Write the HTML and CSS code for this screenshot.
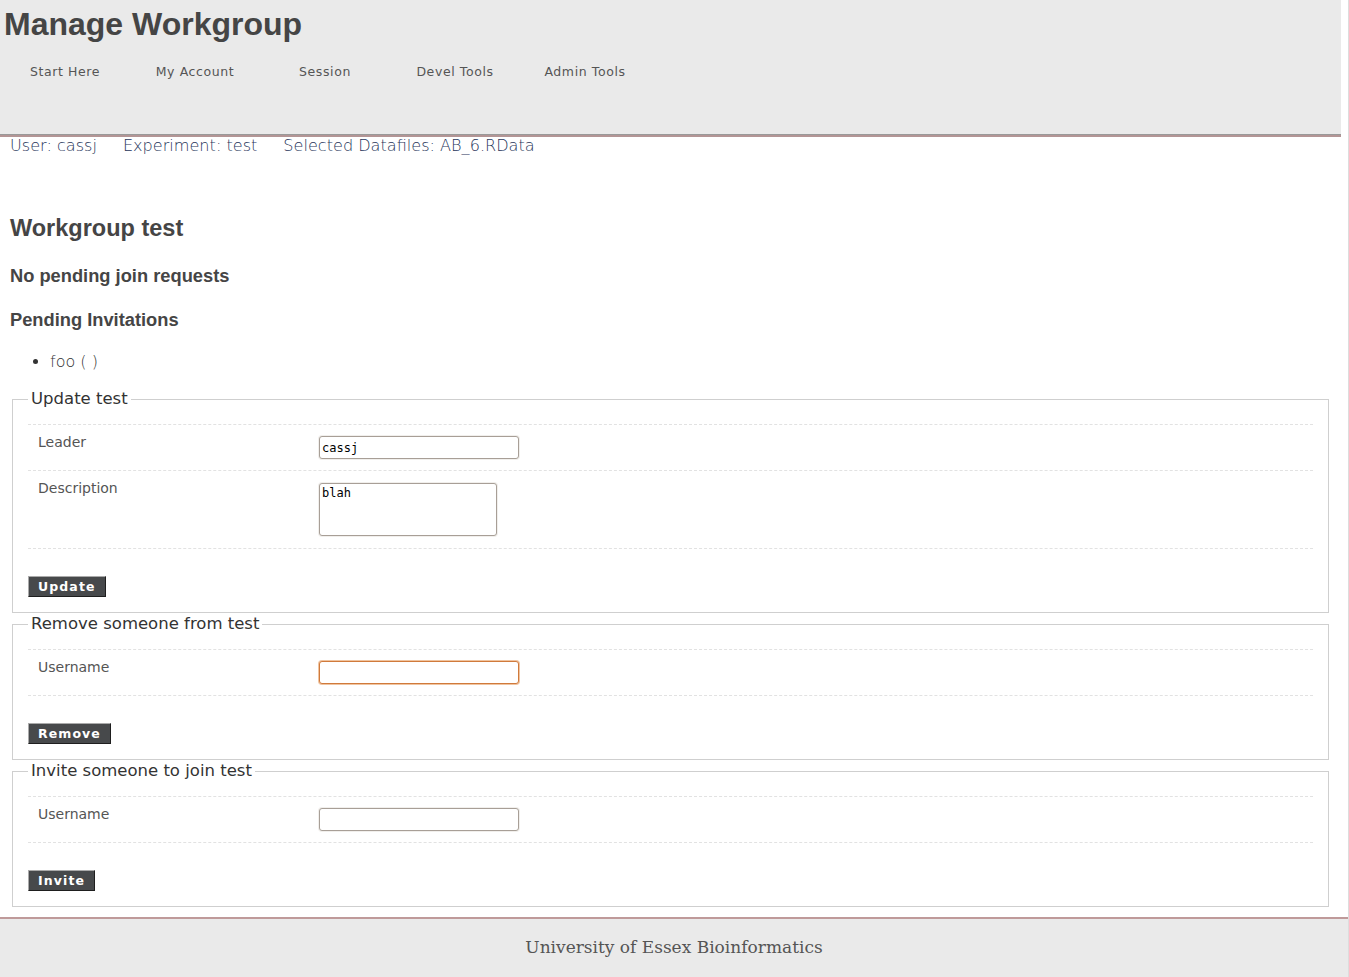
FILE: index.html
```html
<!DOCTYPE html>
<html>
<head>
<meta charset="utf-8">
<title>Manage Workgroup</title>
<link rel="stylesheet" href="styles.css">
</head>
<body>
<div class="page">
  <header class="top">
    <h1 class="title">Manage Workgroup</h1>
    <nav class="nav">
      <a class="nav-item">Start Here</a>
      <a class="nav-item">My Account</a>
      <a class="nav-item">Session</a>
      <a class="nav-item">Devel Tools</a>
      <a class="nav-item">Admin Tools</a>
    </nav>
  </header>
  <main class="main">
    <div class="info">
      <span class="info-item">User: cassj</span>
      <span class="info-item">Experiment: test</span>
      <span class="info-item">Selected Datafiles: AB_6.RData</span>
    </div>
    <h2 class="h-group">Workgroup test</h2>
    <h3 class="h-sub h-first">No pending join requests</h3>
    <h3 class="h-sub">Pending Invitations</h3>
    <ul class="invites">
      <li>foo ( )</li>
    </ul>

    <fieldset class="box">
      <legend class="box-legend">Update test</legend>
      <div class="rows">
        <div class="row">
          <label class="row-label">Leader</label>
          <div class="row-field"><input class="text-in" type="text" value="cassj"></div>
        </div>
        <div class="row">
          <label class="row-label">Description</label>
          <div class="row-field"><textarea class="text-area">blah</textarea></div>
        </div>
      </div>
      <div class="actions"><button class="btn">Update</button></div>
    </fieldset>

    <fieldset class="box">
      <legend class="box-legend">Remove someone from test</legend>
      <div class="rows">
        <div class="row">
          <label class="row-label">Username</label>
          <div class="row-field"><input class="text-in focused" type="text" value=""></div>
        </div>
      </div>
      <div class="actions"><button class="btn">Remove</button></div>
    </fieldset>

    <fieldset class="box box-last">
      <legend class="box-legend">Invite someone to join test</legend>
      <div class="rows">
        <div class="row">
          <label class="row-label">Username</label>
          <div class="row-field"><input class="text-in" type="text" value=""></div>
        </div>
      </div>
      <div class="actions"><button class="btn">Invite</button></div>
    </fieldset>
  </main>
  <footer class="foot">University of Essex Bioinformatics</footer>
</div>
</body>
</html>
```

FILE: styles.css
```css
html, body {
  margin: 0;
  padding: 0;
  background: #fff;
}
body {
  font-family: "DejaVu Sans", sans-serif;
  color: #444;
}
.page {
  width: 1348px;
  min-height: 977px;
  border-right: 1px solid #ddd;
  display: flex;
  flex-direction: column;
}
.top {
  width: 1341px;
  height: 135px;
  background: #eaeaea;
  border-bottom: 2px solid #b39595;
  box-shadow: inset 0 -1px 0 #999;
  flex: none;
}
.title {
  margin: 0;
  padding: 6px 0 0 4px;
  font-family: "Liberation Sans", Arial, sans-serif;
  font-weight: bold;
  font-size: 32px;
  line-height: 37px;
  color: #454545;
}
.nav {
  display: flex;
  margin-top: 19px;
}
.nav-item {
  width: 130px;
  text-align: center;
  font-size: 12.5px;
  letter-spacing: 0.6px;
  line-height: 20px;
  color: #555;
}
.main {
  width: 1321px;
  padding: 0 10px;
  flex: 1;
}
.info {
  line-height: 18px;
  font-size: 16.1px;
  font-weight: 200;
  color: #1f355a;
  display: flex;
  gap: 26px;
}
.h-group {
  margin: 59px 0 0;
  font-family: "Liberation Sans", Arial, sans-serif;
  font-size: 23.5px;
  line-height: 28px;
  color: #454545;
}
.h-sub {
  margin: 22px 0 0;
  font-family: "Liberation Sans", Arial, sans-serif;
  font-size: 18.3px;
  line-height: 22px;
  color: #454545;
}
.h-first {
  margin-top: 23px;
}
.invites {
  margin: 21px 0 0;
  padding-left: 40px;
  font-size: 16px;
  font-weight: 200;
  line-height: 20px;
  color: #333;
}
.box {
  margin: 16px 2px 0;
  padding: 0 15px 15px;
  border: 1px solid #cfcfcf;
}
.box + .box {
  margin-top: 0;
}
.box-legend {
  padding: 0 3px;
  font-size: 16.5px;
  line-height: 22px;
  color: #333;
}
.rows {
  margin-top: 14px;
  border-bottom: 1px dashed #e2e2e2;
}
.row {
  display: grid;
  grid-template-columns: 291px 1fr;
  border-top: 1px dashed #e2e2e2;
  padding: 11px 0;
}
.row-label {
  padding-left: 10px;
  margin-top: -3px;
  font-size: 14px;
  line-height: 18px;
  color: #555;
}
.row-field {
  display: flex;
  align-items: flex-start;
}
.text-in {
  box-sizing: border-box;
  width: 200px;
  height: 23px;
  border: 1px solid #a89f97;
  border-radius: 3px;
  padding: 2px 2px;
  font-family: "DejaVu Sans Mono", monospace;
  font-size: 12px;
  color: #000;
  box-shadow: 0 0 0 1px #f1efec;
  outline: none;
}
.text-in.focused {
  border-color: #d07a3c;
  box-shadow: 0 0 0 1px #f0c4a0;
}
.text-area {
  box-sizing: border-box;
  width: 178px;
  height: 53px;
  margin: 1px 0;
  border: 1px solid #a89f97;
  border-radius: 3px;
  padding: 2px 2px;
  font-family: "DejaVu Sans Mono", monospace;
  font-size: 12px;
  color: #000;
  resize: none;
  box-shadow: 0 0 0 1px #f1efec;
  outline: none;
}
.actions {
  margin-top: 27px;
  display: flex;
}
.btn {
  background: #47494b;
  color: #fff;
  font-family: "DejaVu Sans", sans-serif;
  font-weight: bold;
  font-size: 12.5px;
  letter-spacing: 1.1px;
  line-height: 15px;
  padding: 2px 9px 2px 9px;
  border: 1px solid;
  border-color: #aaa #1e1e1e #1e1e1e #aaa;
  border-radius: 0;
}
.foot {
  margin-top: 10px;
  border-top: 2px solid #bf9a9a;
  background: #eaeaea;
  height: 61px;
  padding-top: 18px;
  box-sizing: border-box;
  text-align: center;
  font-family: "DejaVu Serif", serif;
  font-size: 17px;
  line-height: 20px;
  color: #555;
  flex: none;
}
```
